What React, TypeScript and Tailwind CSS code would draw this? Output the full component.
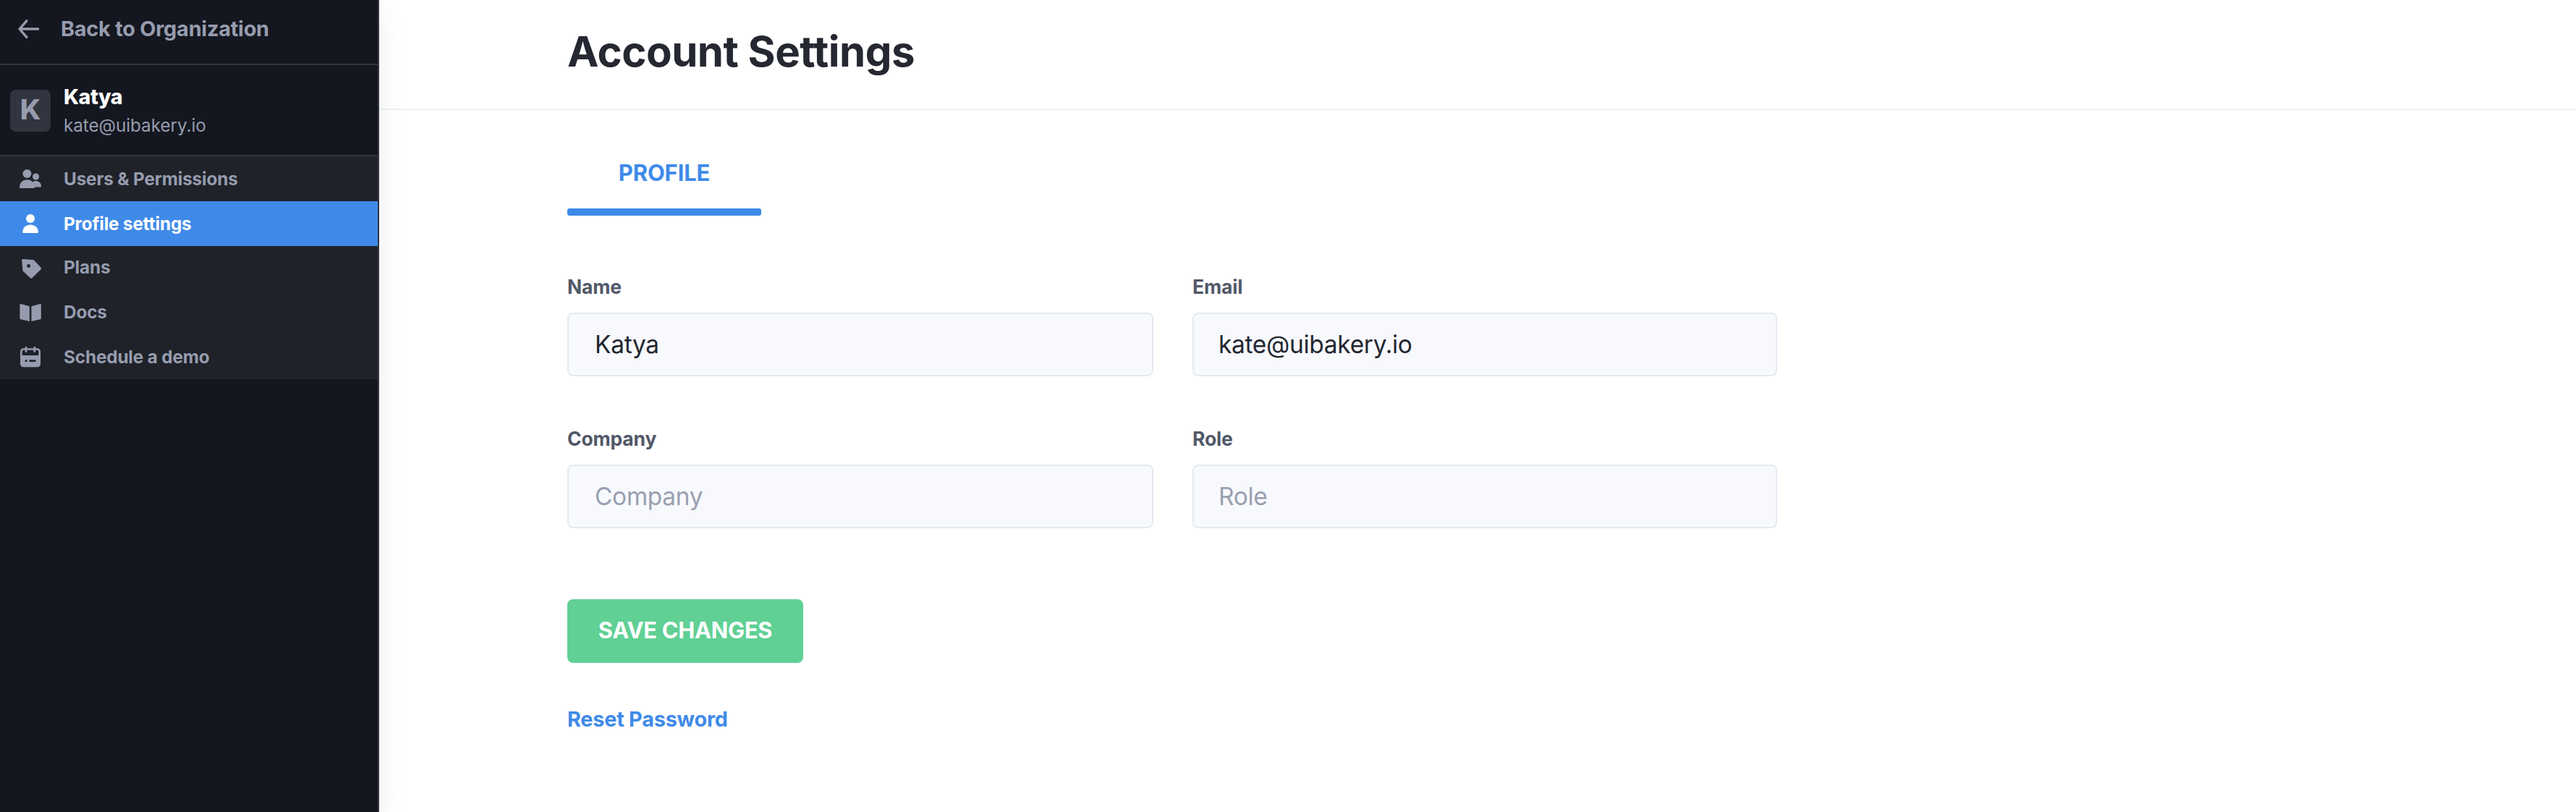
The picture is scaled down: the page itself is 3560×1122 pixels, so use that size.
import React from "react";

function Icon({ viewBox, children }: { viewBox: string; children: React.ReactNode }) {
  return (
    <svg viewBox={viewBox} className="h-9 w-9 shrink-0" fill="currentColor">
      {children}
    </svg>
  );
}

const menu = [
  {
    label: "Users & Permissions",
    row: "h-[62px]",
    icon: (
      <Icon viewBox="24 229 36 36">
        <circle cx="37.4" cy="240" r="6" />
        <circle cx="49.5" cy="244.1" r="4.6" />
        <path d="M27 259C27 252.5 31.5 248.3 37.4 248.3C40.6 248.3 43.3 249.5 45.2 251.5C46.4 250.6 47.9 250.1 49.5 250.1C53.9 250.1 57 253.3 57 257.4Q57 258.4 56 258.4H48V259Q48 260 47 260H28Q27 260 27 259Z" />
      </Icon>
    ),
  },
  {
    label: "Profile settings",
    row: "h-[62px] bg-[#3f8ae9] text-white",
    icon: (
      <Icon viewBox="24 291 36 36">
        <circle cx="42" cy="302" r="6" />
        <path d="M31.2 320.8C31.2 314.6 36 310.4 42 310.4S53 314.6 53 320.8Q53 322 51.8 322H32.4Q31.2 322 31.2 320.8Z" />
      </Icon>
    ),
  },
  {
    label: "Plans",
    row: "h-[60px] pb-0.5",
    icon: (
      <Icon viewBox="24 351 36 36">
        <path
          fillRule="evenodd"
          d="M31.3 358L45.2 358.9Q46.4 359 47.2 359.8L56.5 369.8Q57.6 371 56.5 372.2L44.6 384.1Q43.2 385.5 41.8 384.1L32.4 375.2Q31.5 374.4 31.4 373.2L30.1 359.3Q30 358 31.3 358ZM39.6 365.1A2.4 2.4 0 1 0 39.6 369.9A2.4 2.4 0 1 0 39.6 365.1Z"
        />
      </Icon>
    ),
  },
  {
    label: "Docs",
    row: "h-[62px]",
    icon: (
      <Icon viewBox="24 413 36 36">
        <path d="M29 420.1L40.8 423.2V444L28.6 441.3Q27.4 441 27.4 440V421.4Q27.4 419.8 29 420.1Z" />
        <path d="M55.2 420.1L43.4 423.2V444L55.6 441.3Q56.8 441 56.8 440V421.4Q56.8 419.8 55.2 420.1Z" />
      </Icon>
    ),
  },
  {
    label: "Schedule a demo",
    row: "h-[62px]",
    icon: (
      <Icon viewBox="24 475 36 36">
        <path
          fillRule="evenodd"
          d="M32.5 481.3H51.5A4.5 4.5 0 0 1 56 485.8V502.8A4.5 4.5 0 0 1 51.5 507.3H32.5A4.5 4.5 0 0 1 28 502.8V485.8A4.5 4.5 0 0 1 32.5 481.3ZM32.7 483.8Q30.6 483.8 30.6 485.9V491H53.4V485.9Q53.4 483.8 51.3 483.8ZM36 497A1.6 1.6 0 1 0 36 500.2A1.6 1.6 0 1 0 36 497ZM41.6 497.2A1.4 1.4 0 0 0 41.6 500H48.4A1.4 1.4 0 0 0 48.4 497.2Z"
        />
        <rect x="34.6" y="478.8" width="2.8" height="8.2" rx="1.4" />
        <rect x="46.4" y="478.8" width="2.8" height="8.2" rx="1.4" />
      </Icon>
    ),
  },
];

function Field({ label, value, pad }: { label: string; value?: string; pad: string }) {
  return (
    <label className="flex flex-col">
      <span className="flex h-10 items-center pt-0.5 text-[26.5px] font-[650] tracking-[-0.006em] text-[#515867]">{label}</span>
      <input
        className={`mt-4 h-[88px] w-full rounded-lg border-2 border-[#e4e9f2] bg-[#f8f9fd] text-[33.4px] tracking-[-0.008em] text-[#222630] outline-none placeholder:text-[#99a0b0] ${pad}`}
        placeholder={label}
        defaultValue={value}
      />
    </label>
  );
}

export default function App() {
  return (
    <div className="flex h-[1122px] w-[3560px] overflow-hidden bg-white font-[Inter,sans-serif]">
      <aside className="z-10 flex w-[524px] shrink-0 flex-col border-r-2 border-[#31353f] bg-[#14171f] text-[#969cae] shadow-[0_16px_40px_rgba(0,0,0,0.07)]">
        <a className="flex h-[90px] items-start border-b-2 border-[#31353f]">
          <span className="flex h-20 items-center pl-[22px]">
            <Icon viewBox="22 22 36 36">
              <path
                d="M52.6 40H27M36.8 28.8L27 40L36.8 51.4"
                fill="none"
                stroke="currentColor"
                strokeWidth="3.4"
                strokeLinecap="round"
                strokeLinejoin="round"
              />
            </Icon>
            <span className="ml-[26px] text-[28.85px] font-[650] tracking-[-0.008em]">Back to Organization</span>
          </span>
        </a>
        <div className="flex h-[126px] border-b-2 border-[#31353f] pl-3.5">
          <div className="mt-[34px] flex h-[58px] w-14 items-center justify-center rounded-lg bg-[#31353f] pb-1 text-[38.8px] font-extrabold">
            K
          </div>
          <div className="ml-[18px] flex flex-col pt-6">
            <span className="h-10 text-[28.6px] leading-10 font-extrabold tracking-[-0.018em] text-white">Katya</span>
            <span className="h-10 text-[24.3px] leading-[39px] font-normal tracking-[-0.003em]">kate@uibakery.io</span>
          </div>
        </div>
        <nav className="flex flex-col bg-[#1f2229]">
          {menu.map((m) => (
            <a key={m.label} className={`flex items-center pl-6 text-[24.3px] font-[650] tracking-[-0.006em] ${m.row}`}>
              {m.icon}
              <span className="ml-7">{m.label}</span>
            </a>
          ))}
        </nav>
      </aside>
      <main className="flex min-w-0 flex-1 flex-col">
        <header className="flex h-[152px] items-center border-b-2 border-[#edf1f7] pb-1.5 pl-[260px]">
          <h1 className="text-[58.2px] font-[650] tracking-[-0.009em] text-[#252831]">Account Settings</h1>
        </header>
        <div className="flex w-[1932px] flex-col items-start pl-[260px]">
          <div className="mt-[27px] flex w-[268px] flex-col">
            <span className="flex h-[120px] items-center justify-center text-[31px] font-[650] tracking-[-0.006em] text-[#3f8ae9]">PROFILE</span>
            <span className="-mt-[11px] h-2.5 rounded-[3px] bg-[#3f8ae9]" />
          </div>
          <form className="mt-[78px] grid grid-cols-[810px_808px] gap-x-[54px] gap-y-[66px]">
            <Field label="Name" value="Katya" pad="px-9" />
            <Field label="Email" value="kate@uibakery.io" pad="px-[34px]" />
            <Field label="Company" pad="px-9" />
            <Field label="Role" pad="px-[34px]" />
          </form>
          <button className="mt-[98px] flex h-[88px] w-[326px] items-center justify-center rounded-lg bg-[#60d095] pb-px text-[30.8px] font-[650] tracking-[-0.008em] text-white">
            SAVE CHANGES
          </button>
          <a className="mt-[58px] flex h-10 items-center text-[28.85px] font-[650] tracking-[-0.008em] text-[#3f8ae9]">Reset Password</a>
        </div>
      </main>
    </div>
  );
}
